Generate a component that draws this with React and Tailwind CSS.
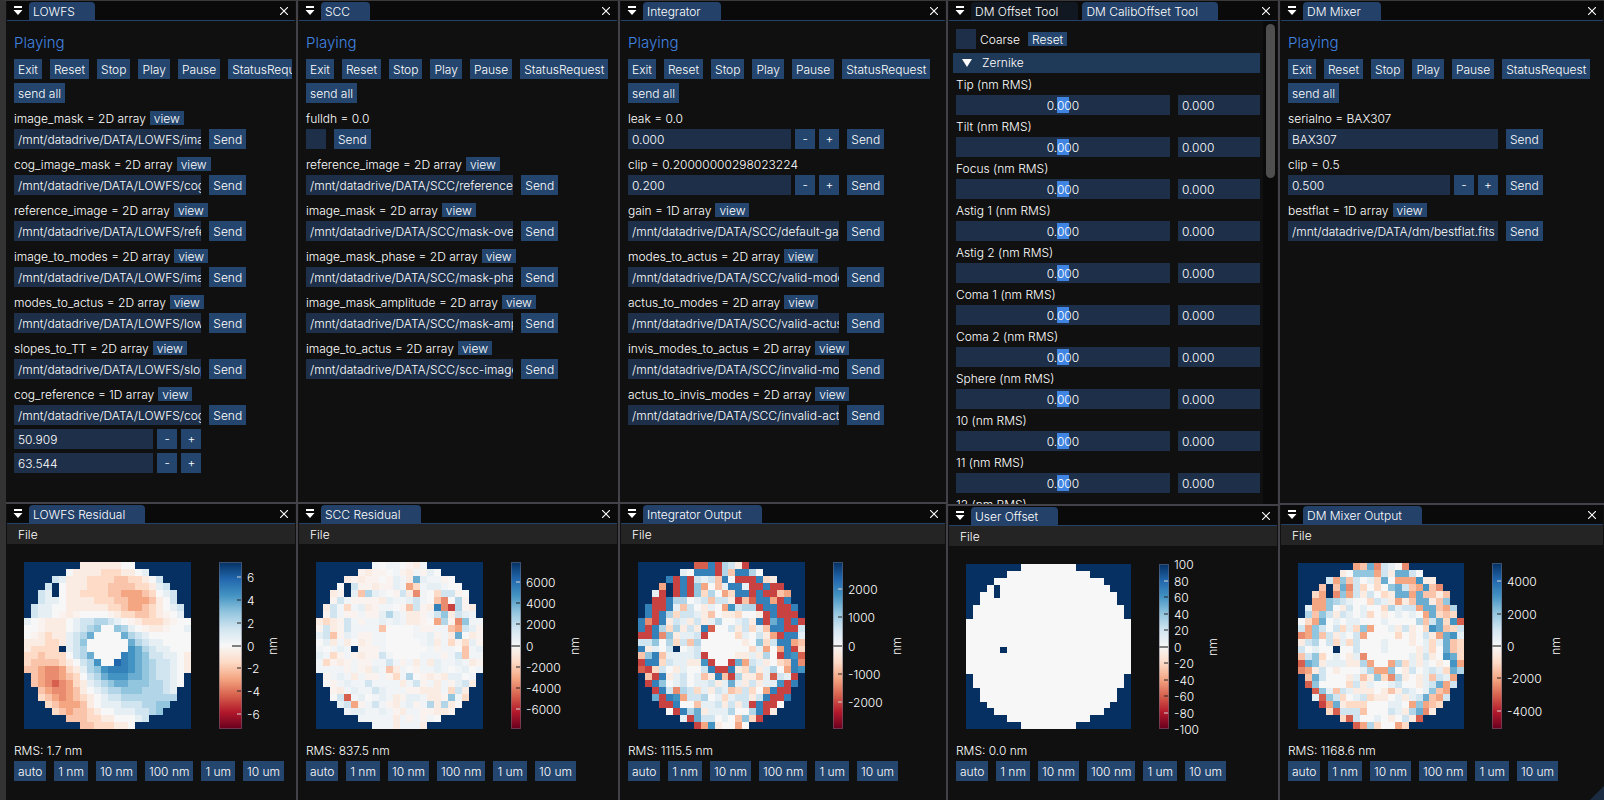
import { useState } from 'react'
import clsx from 'clsx'

// Diverging red/blue scale, 'a' (most negative) to 'u' (most positive), 'k' is zero.
// 'x' and 'w' are the faint steps on either side of zero.
const RDBU = {
  a: '#67001f', b: '#8d0c25', c: '#b2182b', d: '#c74240', e: '#d6604d', f: '#e98b6e', g: '#f4a582',
  h: '#f9c4aa', i: '#fddbc7', j: '#faebe3', x: '#f9f2ee', k: '#f7f7f7', w: '#f0f4f6', l: '#e6eff4',
  m: '#d1e5f0', n: '#b2d5e7', o: '#92c5de', p: '#6bacd1', q: '#4393c3', r: '#3480b9', s: '#2166ac',
  t: '#134b87', u: '#053061',
}

// Active cells per row, centred on a 24x24 grid. '#' is a dead actuator.
const MAPS = {
  lowfs: [
    'jjjjjjkk',
    'kjjjjiiijjkl',
    'mljjjiiiihhiijkm',
    'm#kjjjiiihhhhiijlm',
    'ml#kjjiiiihhggghiklm',
    'mllkjjjjiiihhggghjkm',
    'mllkkjjjjjjiihgghijklm',
    'mllkxjxkkkkxjiihhijxkl',
    'lkxjjjklmmnnmlkxjiiijxkk',
    'kkxjjjklmnokkonlkxjjxkkl',
    'kxjijjlmnpkkkkpnmlkkkkkk',
    'jjjiijlmokkkkkkpnmllkkkk',
    'jiiii#lmnkkkkkkqpnmllkkk',
    'iihiiikmnpkkkkrqpommllkj',
    'ihhhhijkmnqkksrqponmmlkj',
    'hhgffgijlnoqrrrqponmmlkj',
    'hgffghikmnpqqqpponmmlk',
    'hgfefgijlmnoppooonnmlk',
    'hgffghjklmnnooonnnml',
    'ihgfghijklmmnnnnnnnn',
    'ihggghjklllmmmnnoo',
    'ihghhijkklllmmno',
    'hhhiijjkkklm',
    'hhiiijjk',
  ],
  scc: [
    'wkwwkxjw',
    'xjxxkwxjwxlk',
    'jxjxxkxlwjplwwxk',
    'k#mxxjxxlwgiwllwkk',
    'jx#lhnlwkxmjfwkimmxk',
    'xmwxxxxjlwwlmwkhfknx',
    'jmwiwljxwwkxhmxjrfdnxj',
    'xmwxxwxxlnlwjjxwmojmlw',
    'jijxmwxwwlwlwjjxkgnxfoww',
    'xmjxmwwwwhkkkkwxxwwhgmlx',
    'lmhxlwxxwwkkkkwwlxwjpkjx',
    'kljwjkjxwwkkkkkwljwixilx',
    'wkwlw#xxxwkkkkkkwxwwkhwl',
    'lwixwxjxxmwkkkkwwwxwmhww',
    'wixjxwxxwwmwxwjwjlwwlwjx',
    'wwwwxwxjlwhjwkxwwlwkwlkw',
    'xwlwjwxxwxiwnkxjxjllkw',
    'kxwlwwmwwwwjwmxwjwxlmj',
    'xjwlwwmlwwwxxjjjwimj',
    'kmewlkwlwjxllwjjxowi',
    'lmgxwmwxjwlxwnjnjk',
    'wllwwlwxjwwxxjjx',
    'wwwwwjwxwxwk',
    'wwwjwwwj',
  ],
  integrator: [
    'eerdnmjd',
    'lkrrrdnhrrnk',
    'rdrdmlmhrkdddrij',
    'g#drdogkhlrrlddrdd',
    'ld#drdoinkgirrdrddhg',
    'ddrnnklmhmmjdherrgdr',
    'rddrlhmkjlkgqmnndrrddr',
    'rdrnimmljhkjjikkjdrddd',
    'rfdrjmljmjlnkklmjrdprdrd',
    'rdrninjmjrekkmjmilhrrddm',
    'ddrfojllmdkkkkilkmjgdrrl',
    'mmoknimhnkkkkkkjkoimrrgh',
    'rjlkm#klmkkkkkkkilgkgrdi',
    'horhllllmdkkkkjjljnkdrqe',
    'drrimlljjqdkkdpgmljkihrf',
    'edimkjlkkmrddrjinjlnkgrq',
    'hdrjlmklhjrhdnjjhlemld',
    'droklmkllmjlpljmjllqdr',
    'drmfnmiljmlhimikgrdd',
    'pdrqgmmnklilmmjmrddr',
    'ddrkkhllmjmjmdrddk',
    'kdrnpjlllnkknrdj',
    'ldpmmklkhoid',
    'dgqjkkgk',
  ],
  empty: [
    'kkkkkkkk',
    'kkkkkkkkkkkk',
    'kkkkkkkkkkkkkkkk',
    'k#kkkkkkkkkkkkkkkk',
    'kk#kkkkkkkkkkkkkkkkk',
    'kkkkkkkkkkkkkkkkkkkk',
    'kkkkkkkkkkkkkkkkkkkkkk',
    'kkkkkkkkkkkkkkkkkkkkkk',
    'kkkkkkkkkkkkkkkkkkkkkkkk',
    'kkkkkkkkkkkkkkkkkkkkkkkk',
    'kkkkkkkkkkkkkkkkkkkkkkkk',
    'kkkkkkkkkkkkkkkkkkkkkkkk',
    'kkkkk#kkkkkkkkkkkkkkkkkk',
    'kkkkkkkkkkkkkkkkkkkkkkkk',
    'kkkkkkkkkkkkkkkkkkkkkkkk',
    'kkkkkkkkkkkkkkkkkkkkkkkk',
    'kkkkkkkkkkkkkkkkkkkkkk',
    'kkkkkkkkkkkkkkkkkkkkkk',
    'kkkkkkkkkkkkkkkkkkkk',
    'kkkkkkkkkkkkkkkkkkkk',
    'kkkkkkkkkkkkkkkkkk',
    'kkkkkkkkkkkkkkkk',
    'kkkkkkkkkkkk',
    'kkkkkkkk',
  ],
  mixer: [
    'ghpfmlkf',
    'jkooogmjppmk',
    'mgohmklipkgggqjj',
    'h#hpfmikikopmhgqhf',
    'ig#fogmjmkijppgphhjh',
    'ggonmlkkimljgjhppjho',
    'lggokjmklkkinlmmgpphgn',
    'nhomjmlklikjklklkgpihi',
    'kigpklkllkkklkkkknhmpiqe',
    'mgomkmiliogkkljmjkiqphim',
    'fgohmjlkmgkkkkikjkmjgpql',
    'jmnkmilimkkklkkkjklilphi',
    'mklkk#kkmkkklkkkkjlikphi',
    'hmoiklkjlfkkkkkkljmjkqpi',
    'epojllljjngkkgniljlkjkqg',
    'fgjmkjkkklnggokjmklmlipn',
    'hpmkkkjlhjoifnjkjlhmlg',
    'eokkkkimjlkklmkkjlmpgm',
    'eolhmljjjkjhjmlklohg',
    'leomiklmijjkljlmphgm',
    'dgpjiiikkkllkgoghi',
    'iemmmhkkkmljnpfj',
    'iemkklkjkmje',
    'egnikkgi',
  ],
}

const BUTTON = 'h-5 shrink-0 bg-[#24456d] px-1 leading-[21px] whitespace-nowrap hover:bg-[#4296fa]'
const FIELD = 'h-5 min-w-0 bg-[#1d2f49] pt-px pl-1 leading-5 outline-none'

function TabBar({ tabs, active }) {
  return (
    <div className="flex h-5 shrink-0 items-end border-b border-[#234169] bg-[#0a0a0a]">
      <button type="button" aria-label="Window menu" className="flex h-full w-[22px] shrink-0 items-center justify-center">
        <svg viewBox="0 0 10 12" className="h-3 w-[10px]" fill="#fff">
          <path d="M1 1h8v2H1zM0.5 5h9L5 10z" />
        </svg>
      </button>
      <div role="tablist" className="flex gap-1">
        {tabs.map(t => (
          <button
            key={t}
            type="button"
            role="tab"
            aria-selected={t === active}
            className={clsx(
              'h-[18px] rounded-t-[4px] pr-5 pl-1 leading-5 whitespace-nowrap',
              t === active ? 'bg-[#234169]' : 'bg-[#121821]',
            )}
          >
            {t}
          </button>
        ))}
      </div>
      <button type="button" aria-label="Close" className="ml-auto flex h-full w-[22px] shrink-0 items-center justify-center">
        <svg viewBox="0 0 8 8" className="size-2" stroke="#fff" strokeWidth="1.1">
          <path d="M0 0l8 8M8 0l-8 8" />
        </svg>
      </button>
    </div>
  )
}

function Stepper({ value, label }) {
  return (
    <div className="flex w-2/3 gap-1">
      <input type="text" defaultValue={value} aria-label={label} className={clsx(FIELD, 'flex-1')} />
      <button type="button" aria-label={`Decrease ${label}`} className="size-5 shrink-0 bg-[#24456d] leading-5">-</button>
      <button type="button" aria-label={`Increase ${label}`} className="size-5 shrink-0 bg-[#24456d] leading-5">+</button>
    </div>
  )
}

function Param({ name, info, kind, value, extra = [] }) {
  return (
    <div className="flex flex-col gap-1">
      <div className="flex h-[14px] gap-1 leading-4">
        <span className="whitespace-nowrap">{name} = {info}</span>
        {kind === 'path' && <button type="button" className="h-[14px] bg-[#24456d] px-1 leading-4">view</button>}
      </div>
      <div className="flex gap-2">
        {kind === 'step' && <Stepper value={value} label={name} />}
        {kind === 'check' && <input type="checkbox" aria-label={name} className="size-5 appearance-none bg-[#1d2f49]" />}
        {(kind === 'path' || kind === 'text') && (
          <input type="text" defaultValue={value} aria-label={name} className={clsx(FIELD, 'w-2/3')} />
        )}
        <button type="button" className={BUTTON}>Send</button>
      </div>
      {extra.map((v, i) => <Stepper key={v} value={v} label={`${name} ${i}`} />)}
    </div>
  )
}

function ControlPanel({ params }) {
  return (
    <div className="min-h-0 flex-1 overflow-hidden pt-[14px] pl-[7px]">
      <h2 className="h-4 text-[15px] leading-4 text-[#4183e0]">Playing</h2>
      <div className="mt-2 mr-[3px] flex gap-2 overflow-hidden">
        {['Exit', 'Reset', 'Stop', 'Play', 'Pause', 'StatusRequest'].map(b => (
          <button key={b} type="button" className={BUTTON}>{b}</button>
        ))}
      </div>
      <button type="button" className={clsx(BUTTON, 'mt-1 block')}>send all</button>
      <div className="mt-2 flex flex-col gap-2">
        {params.map(p => <Param key={p.name} {...p} />)}
      </div>
    </div>
  )
}

const MODES = ['Tip', 'Tilt', 'Focus', 'Astig 1', 'Astig 2', 'Coma 1', 'Coma 2', 'Sphere', '10', '11', '12']

function ModeSlider({ name }) {
  const [value, setValue] = useState(0)
  const label = `${name} (nm RMS)`
  return (
    <div className="flex flex-col gap-1">
      <label htmlFor={`mode-${name}`} className="h-[14px] leading-4">{label}</label>
      <div className="flex gap-2">
        <div className="relative h-5 flex-1">
          <input
            id={`mode-${name}`}
            type="range"
            min="-1"
            max="1"
            step="0.001"
            value={value}
            onChange={e => setValue(Number(e.target.value))}
            className="block h-5 w-full appearance-none bg-[#1d2f49] px-[2px] [&::-webkit-slider-thumb]:h-4 [&::-webkit-slider-thumb]:w-3 [&::-webkit-slider-thumb]:appearance-none [&::-webkit-slider-thumb]:bg-[#4084e2]"
          />
          <span className="pointer-events-none absolute inset-0 text-center leading-[21px]">{value.toFixed(3)}</span>
        </div>
        <input type="text" readOnly value={value.toFixed(3)} aria-label={label} className={clsx(FIELD, 'w-[27%]')} />
      </div>
    </div>
  )
}

function OffsetPanel() {
  return (
    <div className="flex min-h-0 flex-1">
      <div className="min-w-0 flex-1 overflow-hidden pt-2 pr-[3px] pl-[7px]">
        <div className="flex items-center">
          <input id="coarse" type="checkbox" className="size-5 appearance-none bg-[#1d2f49]" />
          <label htmlFor="coarse" className="ml-1 h-[14px] leading-4">Coarse</label>
          <button type="button" className="ml-2 h-[14px] bg-[#24456d] px-1 leading-4">Reset</button>
        </div>
        <button type="button" aria-expanded="true" className="mt-1 -ml-[3px] flex h-5 w-[calc(100%+3px)] items-center bg-[#1f3958] pl-[9px] leading-[22px]">
          <svg viewBox="0 0 10 8" className="mr-[10px] h-2 w-[10px]" fill="#fff">
            <path d="M0 0h10L5 8z" />
          </svg>
          Zernike
        </button>
        <div className="mt-1 flex flex-col gap-1">
          {MODES.map(m => <ModeSlider key={m} name={m} />)}
        </div>
      </div>
      <div className="w-[14px] shrink-0 bg-[#0a0a0a] px-[3px] pt-[3px]">
        <div className="h-[32%] w-[9px] rounded-full bg-[#4f4f4f]" />
      </div>
    </div>
  )
}

function HeatMap({ rows }) {
  return (
    <svg viewBox="0 0 24 24" className="aspect-square h-full shrink-0" shapeRendering="crispEdges" role="img" aria-label="Actuator map">
      <rect width="24" height="24" fill={RDBU.u} />
      {rows.map((row, y) =>
        [...row].map((c, i) => c !== '#' && (
          <rect key={`${y}-${i}`} x={(24 - row.length) / 2 + i} y={y} width="1" height="1" fill={RDBU[c]} />
        )),
      )}
    </svg>
  )
}

function ColorBar({ max, step, barClass, labelClass }) {
  const n = Math.floor(max / step)
  const ticks = Array.from({ length: 2 * n + 1 }, (_, i) => (n - i) * step)
  const top = v => ({ top: `${50 - (v / max) * 50}%` })
  return (
    <div className="ml-7 flex h-full">
      <div
        className={clsx(
          'relative bg-[linear-gradient(to_bottom,#053061,#2166ac,#4393c3,#92c5de,#d1e5f0,#f7f7f7,#fddbc7,#f4a582,#d6604d,#b2182b,#67001f)] shadow-[inset_0_0_0_1px_rgba(110,110,128,0.5)]',
          barClass,
        )}
      >
        {ticks.filter(v => Math.abs(v) < max).map(v => (
          <span
            key={v}
            style={top(v)}
            className={clsx(
              'absolute right-px -translate-y-1/2',
              v === 0 ? 'h-[2px] w-[9px] bg-[#7f7f7f]' : 'h-px w-1',
              v !== 0 && (Math.abs(v) / max > 0.65 ? 'bg-[#d8d8d8]' : 'bg-[#222]'),
            )}
          />
        ))}
      </div>
      <div className={clsx('relative ml-[5px]', labelClass)}>
        {ticks.map(v => (
          <span key={v} style={top(v)} className="absolute left-0 -translate-y-1/2 pt-[2px] leading-[14px]">{v}</span>
        ))}
      </div>
      <div className="flex w-[14px] items-center justify-center">
        <span className="-rotate-90">nm</span>
      </div>
    </div>
  )
}

function MapPanel({ map, rms, ...bar }) {
  return (
    <>
      <div className="flex h-5 shrink-0 bg-[#242424] pl-[11px]">
        <button type="button" className="h-5 leading-[22px]">File</button>
      </div>
      <div className="flex min-h-0 flex-1 flex-col pt-[18px] pb-[19px] pl-[7px]">
        <div className="flex min-h-0 flex-1 pl-[10px]">
          <HeatMap rows={MAPS[map]} />
          <ColorBar {...bar} />
        </div>
        <p className="mt-[14px] h-[14px] leading-4">RMS: {rms} nm</p>
        <div className="mt-1 flex gap-2">
          {['auto', '1 nm', '10 nm', '100 nm', '1 um', '10 um'].map(b => (
            <button key={b} type="button" className={BUTTON}>{b}</button>
          ))}
        </div>
      </div>
    </>
  )
}

const path = (name, dims, value, extra) => ({ name, info: `${dims} array`, kind: 'path', value: `/mnt/datadrive/DATA/${value}`, extra })

const LOWFS = [
  path('image_mask', '2D', 'LOWFS/image_mask.fits'),
  path('cog_image_mask', '2D', 'LOWFS/cog_image_mask.fits'),
  path('reference_image', '2D', 'LOWFS/reference_image.fits'),
  path('image_to_modes', '2D', 'LOWFS/image_to_modes.fits'),
  path('modes_to_actus', '2D', 'LOWFS/lowfs_to_actus.fits'),
  path('slopes_to_TT', '2D', 'LOWFS/slopes_to_TT.fits'),
  path('cog_reference', '1D', 'LOWFS/cog_reference.fits', ['50.909', '63.544']),
]

const SCC = [
  { name: 'fulldh', info: '0.0', kind: 'check' },
  path('reference_image', '2D', 'SCC/reference-image.fits'),
  path('image_mask', '2D', 'SCC/mask-overlay.fits'),
  path('image_mask_phase', '2D', 'SCC/mask-phase.fits'),
  path('image_mask_amplitude', '2D', 'SCC/mask-amplitude.fits'),
  path('image_to_actus', '2D', 'SCC/scc-image-to-actus.fits'),
]

const INTEGRATOR = [
  { name: 'leak', info: '0.0', kind: 'step', value: '0.000' },
  { name: 'clip', info: '0.20000000298023224', kind: 'step', value: '0.200' },
  path('gain', '1D', 'SCC/default-gain.fits'),
  path('modes_to_actus', '2D', 'SCC/valid-modes-to-actus.fits'),
  path('actus_to_modes', '2D', 'SCC/valid-actus-to-modes.fits'),
  path('invis_modes_to_actus', '2D', 'SCC/invalid-modes-to-actus.fits'),
  path('actus_to_invis_modes', '2D', 'SCC/invalid-actus-to-modes.fits'),
]

const MIXER = [
  { name: 'serialno', info: 'BAX307', kind: 'text', value: 'BAX307' },
  { name: 'clip', info: '0.5', kind: 'step', value: '0.500' },
  path('bestflat', '1D', 'dm/bestflat.fits'),
]

function Column({ className, upper, lower, tabs, active, title, children }) {
  return (
    <div className={clsx('flex min-w-0 flex-col', className)}>
      <section className={clsx('mx-px flex min-h-0 flex-col', upper)}>
        <TabBar tabs={tabs} active={active ?? tabs[0]} />
        {children[0]}
      </section>
      <div className="h-[2px] shrink-0 bg-[#424248]" />
      <section className={clsx('mx-px flex min-h-0 flex-col', lower)}>
        <TabBar tabs={[title]} active={title} />
        {children[1]}
      </section>
    </div>
  )
}

export default function App() {
  return (
    <main className="relative flex h-screen gap-[2px] overflow-hidden border-t border-l-6 border-t-[#3a3a3c] border-l-[#333] bg-[#424248] font-['Inter',sans-serif] text-xs leading-[14px] font-light text-white *:bg-[#101010]">
      <Column className="flex-[290]" upper="flex-[501]" lower="flex-[296]" tabs={['LOWFS']} title="LOWFS Residual">
        <ControlPanel params={LOWFS} />
        <MapPanel map="lowfs" rms="1.7" max={7.36} step={2} barClass="w-[23px]" labelClass="w-[19px]" />
      </Column>
      <Column className="flex-[320]" upper="flex-[501]" lower="flex-[296]" tabs={['SCC']} title="SCC Residual">
        <ControlPanel params={SCC} />
        <MapPanel map="scc" rms="837.5" max={7950} step={2000} barClass="w-[10px]" labelClass="w-[42px]" />
      </Column>
      <Column className="flex-[326]" upper="flex-[501]" lower="flex-[296]" tabs={['Integrator']} title="Integrator Output">
        <ControlPanel params={INTEGRATOR} />
        <MapPanel map="integrator" rms="1115.5" max={2982} step={1000} barClass="w-[10px]" labelClass="w-[42px]" />
      </Column>
      <Column
        className="flex-[330]"
        upper="flex-[503]"
        lower="flex-[294]"
        tabs={['DM Offset Tool', 'DM CalibOffset Tool']}
        active="DM CalibOffset Tool"
        title="User Offset"
      >
        <OffsetPanel />
        <MapPanel map="empty" rms="0.0" max={100} step={20} barClass="w-[10px]" labelClass="w-[32px]" />
      </Column>
      <Column className="flex-[324]" upper="flex-[502]" lower="flex-[295]" tabs={['DM Mixer']} title="DM Mixer Output">
        <ControlPanel params={MIXER} />
        <MapPanel map="mixer" rms="1168.6" max={5140} step={2000} barClass="w-[10px]" labelClass="w-[42px]" />
      </Column>
      <svg viewBox="0 0 14 14" className="absolute right-0 bottom-0 size-[14px] bg-transparent!">
        <path d="M14 0v14H0z" fill="#1b2c42" />
      </svg>
    </main>
  )
}
